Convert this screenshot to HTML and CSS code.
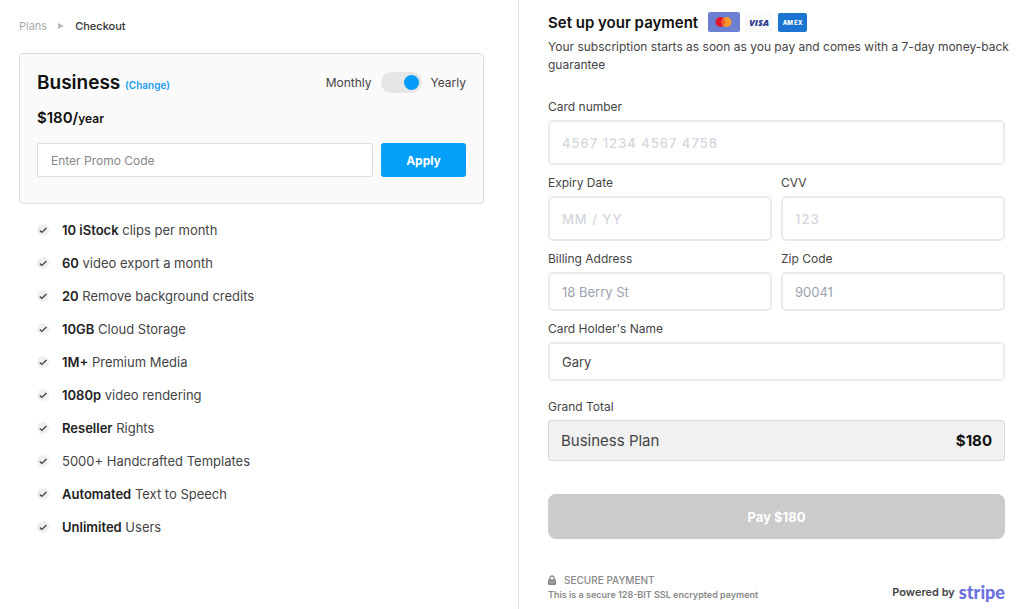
FILE: index.html
```
<!DOCTYPE html>
<html lang="en">
<head>
  <meta charset="UTF-8">
  <meta name="viewport" content="width=device-width, initial-scale=1.0">
  <title>Checkout</title>
  <link rel="stylesheet" href="styles.css">
</head>
<body>
  <svg class="sprite" aria-hidden="true">
    <symbol id="check" viewBox="0 0 13 13">
      <circle cx="6.5" cy="6.5" r="6.5" fill="#f0f0f0"/>
      <path d="M3 7l2.3 2.1L10.2 4.4" fill="none" stroke="#444" stroke-width="1.5"/>
    </symbol>
  </svg>
  <div class="checkout">
    <section class="plan">
      <nav class="breadcrumb">
        <a href="#">Plans</a>
        <svg width="6" height="6" viewBox="0 0 6 6"><path d="M0 0l6 3-6 3z" fill="#bbb"/></svg>
        <span class="current">Checkout</span>
      </nav>

      <div class="plan-card">
        <div class="plan-top">
          <h1>Business <a href="#">(Change)</a></h1>
          <div class="billing">
            <label for="yearly">Monthly</label>
            <input type="checkbox" id="yearly" class="switch" checked>
            <label for="yearly">Yearly</label>
          </div>
        </div>
        <p class="price">$180/<span>year</span></p>
        <form class="promo">
          <input type="text" placeholder="Enter Promo Code" aria-label="Promo code">
          <button type="button">Apply</button>
        </form>
      </div>

      <ul class="features">
        <li><svg><use href="#check"/></svg><span><b>10 iStock</b> clips per month</span></li>
        <li><svg><use href="#check"/></svg><span><b>60</b> video export a month</span></li>
        <li><svg><use href="#check"/></svg><span><b>20</b> Remove background credits</span></li>
        <li><svg><use href="#check"/></svg><span><b>10GB</b> Cloud Storage</span></li>
        <li><svg><use href="#check"/></svg><span><b>1M+</b> Premium Media</span></li>
        <li><svg><use href="#check"/></svg><span><b>1080p</b> video rendering</span></li>
        <li><svg><use href="#check"/></svg><span><b>Reseller</b> Rights</span></li>
        <li><svg><use href="#check"/></svg><span>5000+ Handcrafted Templates</span></li>
        <li><svg><use href="#check"/></svg><span><b>Automated</b> Text to Speech</span></li>
        <li><svg><use href="#check"/></svg><span><b>Unlimited</b> Users</span></li>
      </ul>
    </section>

    <section class="payment">
      <div class="payment-title">
        <h2>Set up your payment</h2>
        <svg class="mastercard" width="32" height="20" viewBox="0 0 32 20">
          <rect width="32" height="20" rx="2" fill="#6b80d0"/>
          <circle cx="12.5" cy="10" r="5" fill="#e0162b"/>
          <circle cx="18.5" cy="10" r="5" fill="#f79a2a"/>
          <path d="M15.5 6a5 5 0 0 1 0 8 5 5 0 0 1 0-8z" fill="#f2622a"/>
        </svg>
        <span class="visa">VISA</span>
        <span class="amex">AM EX</span>
      </div>
      <p class="intro">Your subscription starts as soon as you pay and comes with a 7-day money-back guarantee</p>

      <form class="card-form">
        <div class="field wide">
          <label for="card">Card number</label>
          <input type="text" id="card" class="digits" placeholder="4567 1234 4567 4758">
        </div>
        <div class="field">
          <label for="expiry">Expiry Date</label>
          <input type="text" id="expiry" class="digits" placeholder="MM / YY">
        </div>
        <div class="field">
          <label for="cvv">CVV</label>
          <input type="text" id="cvv" class="digits" placeholder="123">
        </div>
        <div class="field">
          <label for="address">Billing Address</label>
          <input type="text" id="address" placeholder="18 Berry St">
        </div>
        <div class="field">
          <label for="zip">Zip Code</label>
          <input type="text" id="zip" placeholder="90041">
        </div>
        <div class="field wide">
          <label for="holder">Card Holder's Name</label>
          <input type="text" id="holder" value="Gary">
        </div>
        <div class="grand wide">
          <p>Grand Total</p>
          <div class="total"><span>Business Plan</span><b>$180</b></div>
        </div>
        <button type="submit" class="pay wide" disabled>Pay $180</button>
      </form>

      <footer>
        <div class="secure">
          <p class="secure-title">
            <svg width="8" height="10" viewBox="0 0 8 10">
              <path d="M2 5V3a2 2 0 0 1 4 0v2" fill="none" stroke="#888" stroke-width="1.3"/>
              <rect y="4.2" width="8" height="5.8" rx="1" fill="#888"/>
              <path d="M1.5 6h5M1.5 8h5" stroke="#bbb" stroke-width=".7"/>
            </svg>
            SECURE PAYMENT
          </p>
          <p class="secure-note">This is a secure 128-BIT SSL encrypted payment</p>
        </div>
        <div class="powered">Powered by <span class="stripe">stripe</span></div>
      </footer>
    </section>
  </div>
</body>
</html>
```

FILE: styles.css
```
* {
  box-sizing: border-box;
}
body {
  margin: 0;
  font-family: Inter, Arial, sans-serif;
  font-size: 13px;
  color: #444;
  background: #fff;
}
h1, h2, p, ul {
  margin: 0;
  padding: 0;
}
a {
  text-decoration: none;
}
input, button {
  font-family: inherit;
}
.sprite {
  display: none;
}
.checkout {
  display: grid;
  grid-template-columns: 519fr 505fr;
  min-height: 100vh;
}

/* left side */
.plan {
  padding: 18px 34px 0 19px;
  border-right: 1px solid #e2e2e2;
}
.breadcrumb {
  display: flex;
  align-items: center;
  gap: 11px;
  height: 16px;
  font-size: 11px;
}
.breadcrumb a {
  color: #aaa;
}
.breadcrumb .current {
  font-weight: 500;
  color: #333;
}
.plan-card {
  margin-top: 19px;
  padding: 17px 17px 26px;
  background: #fafafa;
  border: 1px solid #ddd;
  border-radius: 4px;
}
.plan-top {
  display: flex;
  justify-content: space-between;
  align-items: center;
  height: 22px;
}
h1 {
  font-size: 19px;
  font-weight: 600;
  color: #111;
}
h1 a {
  font-size: 10px;
  color: #1a9cf0;
}
.billing {
  display: flex;
  align-items: center;
  gap: 9px;
  font-size: 12px;
}
.switch {
  appearance: none;
  display: flex;
  align-items: center;
  justify-content: flex-end;
  width: 41px;
  height: 21px;
  margin: 0;
  padding: 3px;
  border-radius: 11px;
  background: #e6e6e6;
}
.switch::before {
  content: "";
  width: 15px;
  height: 15px;
  border-radius: 50%;
  background: #059bf8;
}
.switch:not(:checked) {
  justify-content: flex-start;
}
.price {
  margin-top: 15px;
  line-height: 20px;
  font-size: 15px;
  font-weight: 600;
  color: #111;
}
.price span {
  font-size: 12px;
}
.promo {
  display: flex;
  gap: 8px;
  margin-top: 14px;
}
.promo input {
  flex: 1;
  min-width: 0;
  height: 34px;
  padding: 0 13px;
  border: 1px solid #ddd;
  border-radius: 2px;
  font-size: 12px;
}
.promo input::placeholder {
  color: #888;
}
.promo button {
  width: 85px;
  height: 34px;
  border: 0;
  border-radius: 3px;
  background: #059ffa;
  color: #fff;
  font-size: 12px;
  font-weight: 700;
}
.features {
  padding: 9px 18px;
  list-style: none;
}
.features li {
  display: flex;
  align-items: center;
  gap: 13px;
  height: 33px;
}
.features svg {
  width: 12px;
  height: 12px;
}
.features b {
  font-weight: 600;
  color: #222;
}

/* right side */
.payment {
  padding: 12px 19px 0 29px;
}
.payment-title {
  display: flex;
  align-items: center;
  height: 20px;
}
h2 {
  font-size: 15px;
  font-weight: 600;
  color: #111;
}
.mastercard {
  margin: 0 5px 0 10px;
}
.visa {
  width: 28px;
  margin-right: 5px;
  line-height: 19px;
  text-align: center;
  background: #fafafa;
  color: #2b3a8c;
  font-family: "Open Sans", sans-serif;
  font-size: 9px;
  font-weight: 800;
  font-style: italic;
}
.amex {
  width: 29px;
  line-height: 19px;
  text-align: center;
  border-radius: 2px;
  background: #1b75d0;
  color: #fff;
  font-size: 6px;
  font-weight: 800;
}
.intro {
  margin: 6px -8px 0 0;
  line-height: 18px;
  font-size: 12px;
}
.card-form {
  display: grid;
  grid-template-columns: 1fr 1fr;
  gap: 10px 9px;
  margin-top: 25px;
}
.wide {
  grid-column: 1 / -1;
}
.field label, .grand p {
  display: block;
  margin-bottom: 5px;
  line-height: 16px;
  font-size: 12px;
}
.field input {
  display: block;
  width: 100%;
  height: 39px;
  padding: 0 12px;
  border: 2px solid #ebebeb;
  border-radius: 5px;
  font-size: 13px;
  color: #444;
}
.field input::placeholder {
  color: #9ca3af;
}
.field .digits {
  height: 45px;
  font-weight: 500;
  letter-spacing: 1px;
}
.field .digits::placeholder {
  color: #d3d7de;
}
.grand {
  margin-top: 8px;
}
.total {
  display: flex;
  justify-content: space-between;
  align-items: center;
  height: 41px;
  padding: 0 12px;
  border: 1px solid #d8d8d8;
  border-radius: 3px;
  background: #f1f1f1;
  font-size: 15px;
}
.total b {
  font-weight: 700;
  color: #111;
}
.pay {
  height: 45px;
  margin-top: 23px;
  border: 0;
  border-radius: 8px;
  background: #cbcbcb;
  color: #fff;
  font-size: 13px;
  font-weight: 700;
}
footer {
  display: flex;
  justify-content: space-between;
  margin-top: 33px;
}
.secure {
  color: #888;
}
.secure-title {
  display: flex;
  align-items: center;
  gap: 8px;
  line-height: 16px;
  font-size: 10px;
  font-weight: 500;
}
.secure-note {
  line-height: 14px;
  font-size: 9px;
  font-weight: 600;
}
.powered {
  display: flex;
  align-items: center;
  gap: 4px;
  height: 24px;
  margin-top: 8px;
  font-size: 11px;
  font-weight: 600;
}
.stripe {
  color: #6a70e0;
  font-family: Lato, sans-serif;
  font-size: 18px;
  font-weight: 900;
  line-height: 20px;
}
```
